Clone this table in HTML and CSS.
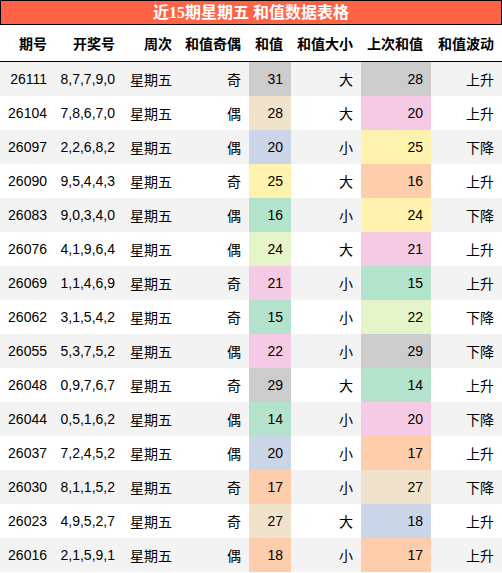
FILE: index.html
```html
<!DOCTYPE html>
<html>
<head>
    <meta charset="utf-8">
    <title>近15期星期五 和值数据表格</title>
    <link rel="stylesheet" href="styles.css">
</head>
<body>
    <div class="title">近15期星期五 和值数据表格</div>
    <table class="sum-table">
        <colgroup>
            <col style="width:55px">
            <col style="width:68px">
            <col style="width:57px">
            <col style="width:69px">
            <col style="width:42px">
            <col style="width:70px">
            <col style="width:70px">
            <col style="width:71px">
        </colgroup>
        <thead>
            <tr>
                <th>期号</th>
                <th>开奖号</th>
                <th>周次</th>
                <th>和值奇偶</th>
                <th>和值</th>
                <th>和值大小</th>
                <th>上次和值</th>
                <th>和值波动</th>
            </tr>
        </thead>
        <tbody>
            <tr><td>26111</td><td>8,7,7,9,0</td><td>星期五</td><td>奇</td><td class="c-gray">31</td><td>大</td><td class="c-gray">28</td><td>上升</td></tr>
            <tr><td>26104</td><td>7,8,6,7,0</td><td>星期五</td><td>偶</td><td class="c-beige">28</td><td>大</td><td class="c-pink">20</td><td>上升</td></tr>
            <tr><td>26097</td><td>2,2,6,8,2</td><td>星期五</td><td>偶</td><td class="c-blue">20</td><td>小</td><td class="c-yellow">25</td><td>下降</td></tr>
            <tr><td>26090</td><td>9,5,4,4,3</td><td>星期五</td><td>奇</td><td class="c-yellow">25</td><td>大</td><td class="c-peach">16</td><td>上升</td></tr>
            <tr><td>26083</td><td>9,0,3,4,0</td><td>星期五</td><td>偶</td><td class="c-green">16</td><td>小</td><td class="c-yellow">24</td><td>下降</td></tr>
            <tr><td>26076</td><td>4,1,9,6,4</td><td>星期五</td><td>偶</td><td class="c-lime">24</td><td>大</td><td class="c-pink">21</td><td>上升</td></tr>
            <tr><td>26069</td><td>1,1,4,6,9</td><td>星期五</td><td>奇</td><td class="c-pink">21</td><td>小</td><td class="c-green">15</td><td>上升</td></tr>
            <tr><td>26062</td><td>3,1,5,4,2</td><td>星期五</td><td>奇</td><td class="c-green">15</td><td>小</td><td class="c-lime">22</td><td>下降</td></tr>
            <tr><td>26055</td><td>5,3,7,5,2</td><td>星期五</td><td>偶</td><td class="c-pink">22</td><td>小</td><td class="c-gray">29</td><td>下降</td></tr>
            <tr><td>26048</td><td>0,9,7,6,7</td><td>星期五</td><td>奇</td><td class="c-gray">29</td><td>大</td><td class="c-green">14</td><td>上升</td></tr>
            <tr><td>26044</td><td>0,5,1,6,2</td><td>星期五</td><td>偶</td><td class="c-green">14</td><td>小</td><td class="c-pink">20</td><td>下降</td></tr>
            <tr><td>26037</td><td>7,2,4,5,2</td><td>星期五</td><td>偶</td><td class="c-blue">20</td><td>小</td><td class="c-peach">17</td><td>上升</td></tr>
            <tr><td>26030</td><td>8,1,1,5,2</td><td>星期五</td><td>奇</td><td class="c-peach">17</td><td>小</td><td class="c-beige">27</td><td>下降</td></tr>
            <tr><td>26023</td><td>4,9,5,2,7</td><td>星期五</td><td>奇</td><td class="c-beige">27</td><td>大</td><td class="c-blue">18</td><td>上升</td></tr>
            <tr><td>26016</td><td>2,1,5,9,1</td><td>星期五</td><td>偶</td><td class="c-peach">18</td><td>小</td><td class="c-peach">17</td><td>上升</td></tr>
        </tbody>
    </table>
</body>
</html>
```

FILE: styles.css
```css
body {
    margin: 0;
    background-color: #ffffff;
    font-family: "Liberation Sans", "Noto Sans CJK SC", sans-serif;
    color: #000;
}

.title {
    height: 23px;
    line-height: 23px;
    border: 1px solid #000;
    background-color: #ff6347;
    color: #fff;
    text-align: center;
    font-family: "Liberation Serif", "Noto Sans CJK SC", serif;
    font-size: 16px;
    font-weight: bold;
}

.sum-table {
    width: 502px;
    table-layout: fixed;
    border-collapse: collapse;
    border-spacing: 0;
    font-size: 14px;
}

.sum-table th,
.sum-table td {
    padding: 0 8px 0 0;
    text-align: right;
    white-space: nowrap;
    overflow: hidden;
}

.sum-table th {
    height: 36px;
    font-weight: bold;
    background-color: #fff;
    border-bottom: 1px solid #000;
}

.sum-table td {
    height: 34px;
}

.sum-table tbody tr:nth-child(odd) {
    background-color: #f3f3f3;
}

/* pastel cell colours */
.c-gray { background-color: #cccccc; }
.c-beige { background-color: #f1e2cc; }
.c-blue { background-color: #cbd5e8; }
.c-yellow { background-color: #fff2ae; }
.c-green { background-color: #b3e2cd; }
.c-lime { background-color: #e6f5c9; }
.c-pink { background-color: #f4cae4; }
.c-peach { background-color: #fdcdac; }
```
